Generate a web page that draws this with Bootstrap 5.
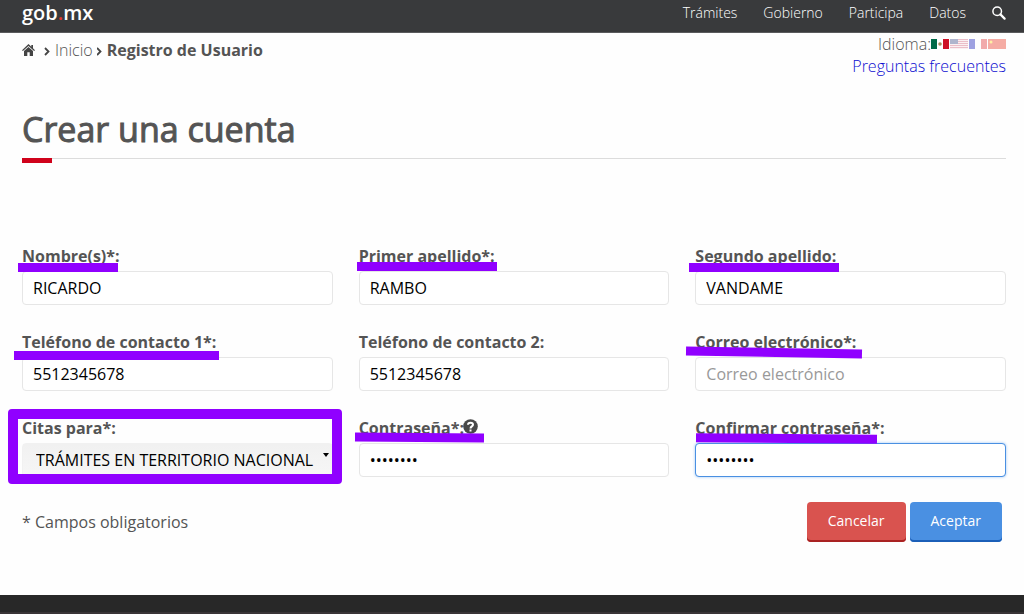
<!DOCTYPE html>
<html lang="es">
<head>
<meta charset="utf-8">
<meta name="viewport" content="width=device-width, initial-scale=1">
<title>Registro de Usuario</title>
<link href="https://cdn.jsdelivr.net/npm/bootstrap@5.3.0/dist/css/bootstrap.min.css" rel="stylesheet">
<style>
  body { font-family: "Open Sans", "Noto Sans", sans-serif; font-size: 16px; line-height: 22px; color: #545454; background: #fefefe; }
  .page-pad { padding-left: 22px; padding-right: 18px; }
  .topbar { height: 33px; background: #393a3c; border-bottom: 1px solid #5a5b5d; padding-bottom: 6px; }
  .topbar a { color: #fff; text-decoration: none; }
  .topbar .brand { font-size: 20px; line-height: 26px; font-weight: 600; }
  .topbar .brand span { color: #e0382c; }
  .menu { gap: 26px; font-size: 14px; font-weight: 300; }
  .menu button { line-height: 0; width: 14px; }
  .crumbs { gap: 4px; padding-top: 6px; }
  .crumbs a { color: #545454; font-weight: 300; text-decoration: none; }
  .crumbs .home { line-height: 18px; }
  .langs { font-weight: 300; line-height: 22px; }
  .langs a { color: #0c0cd0; text-decoration: none; }
  .flags { gap: 1px; }
  .flags button { line-height: 0; }
  .faded { opacity: .4; }
  .title-row { margin-top: 28px; border-bottom: 1px solid #dcdcdc; height: 54px; }
  .title-row h1 { font-size: 34px; line-height: 48px; font-weight: 400; margin: 0; -webkit-text-stroke: 1px #545454; }
  .red-bar { width: 30px; height: 5px; background: #d0021b; margin-top: -1px; }
  .fields { display: grid; grid-template-columns: repeat(3, minmax(0, 1fr)); gap: 26px; margin-top: 82px; }
  .field { position: relative; }
  .field label { display: block; font-weight: 700; line-height: 22px; height: 26px; }
  .field .form-control, .field .form-select { height: 34px; font-size: 16px; line-height: 22px; padding: 4px 10px; color: #000; border: 1px solid #e6e6e6; border-radius: 4px; background-color: #fff; }
  .field .form-control::placeholder { color: #999; }
  .field .form-control.active-box { border-color: #4a90e2; box-shadow: 0 0 3px #9cc5f5; }
  .field .form-select { background: linear-gradient(#f1f1f1, #f6f6f6); border-color: #f1f1f1; padding-left: 13px; }
  .caret { position: absolute; right: 4px; top: 36px; }
  .help { position: absolute; left: 104px; top: 2px; line-height: 0; }
  .marker { position: absolute; height: 9px; background: #9000ff; pointer-events: none; z-index: 2; }
  .m-name { left: -4px; top: 18px; width: 100px; }
  .m-first { left: -2px; top: 17px; width: 140px; }
  .m-second { left: -6px; top: 18px; width: 150px; }
  .m-phone { left: -8px; top: 20px; width: 205px; }
  .m-mail { left: -9px; top: 17px; width: 176px; transform: rotate(1deg); }
  .m-pass { left: -4px; top: 16px; width: 129px; transform: rotate(.5deg); }
  .m-conf { left: 1px; top: 17px; width: 181px; transform: rotate(.5deg); }
  .m-box { left: -14px; right: -9px; top: -8px; height: 75px; background: none; border: 10px solid #9000ff; border-radius: 4px; }
  .actions { margin-top: 25px; padding-right: 4px; gap: 4px; }
  .btn-gob { height: 40px; border: 0; border-radius: 4px; font-size: 14px; line-height: 20px; padding: 0 21px 2px; color: #fff; }
  .btn-gob.cancel { background: #d9534f; box-shadow: inset 0 -2px #a92222; }
  .btn-gob.accept { background: #4a90e2; box-shadow: inset 0 -2px #1b5fb8; }
  .bottom-bar { margin-top: 53px; height: 19px; background: #282828; border-bottom: 2px solid #393437; }
</style>
</head>
<body>
<header class="topbar page-pad d-flex align-items-center justify-content-between">
  <a class="brand" href="#">gob<span>.</span>mx</a>
  <nav class="menu d-flex align-items-center">
    <a href="#">Trámites</a>
    <a href="#">Gobierno</a>
    <a href="#">Participa</a>
    <a href="#">Datos</a>
    <button class="bg-transparent border-0 p-0" type="button" aria-label="Buscar">
      <svg width="14" height="14" viewBox="0 0 14 14" fill="none" stroke="#fff"><circle cx="5.200" cy="5.200" r="4.300" stroke-width="1.500"/><path d="M8.400 8.400 12.600 12.600" stroke-width="2.200" stroke-linecap="round"/></svg>
    </button>
  </nav>
</header>

<div class="page-pad d-flex justify-content-between">
  <nav class="crumbs d-flex align-items-start" aria-label="Ruta">
    <a class="home" href="#" aria-label="Portada"><svg width="13" height="14" viewBox="0 0 13 14" fill="#444"><path d="M6.500 1 0 7.200l.9.900L6.500 2.900l5.600 5.200.900-.900-2-1.900V2H9.300v1.700z"/><path d="M6.500 3.900 2 8v5h3.300V9.200h2.400V13H11V8z"/></svg></a>
    <svg class="mt-2 ms-1" width="8" height="10" viewBox="0 0 8 10" fill="none" stroke="#444" stroke-width="1.800"><path d="M2 1l3.500 3.500L2 8"/></svg>
    <a href="#">Inicio</a>
    <svg class="mt-2" width="6" height="10" viewBox="0 0 6 10" fill="none" stroke="#444" stroke-width="1.800"><path d="M0 1l3.500 3.500L0 8"/></svg>
    <strong>Registro de Usuario</strong>
  </nav>
  <div class="langs d-flex flex-column align-items-end">
    <div class="d-flex align-items-center">
      <span>Idioma:</span>
      <div class="flags d-flex">
        <button class="bg-transparent border-0 p-0" type="button" aria-label="Español"><svg width="18" height="10" viewBox="0 0 18 10"><path fill="#fff" d="M0 0h18v10H0z"/><path fill="#006a48" d="M0 0h6v10H0z"/><path fill="#ce1126" d="M12 0h6v10h-6z"/><circle cx="9" cy="5" r="1.800" fill="#a68b5c"/></svg></button>
        <button class="bg-transparent border-0 p-0 faded" type="button" aria-label="English"><svg width="18" height="10" viewBox="0 0 18 10"><path fill="#f6dde2" d="M0 0h18v10H0z"/><path stroke="#d06078" d="M0 .5h18M0 2.500h18M0 4.500h18M0 6.500h18M0 8.500h18"/><path fill="#3c4a86" d="M0 0h8v5H0z"/></svg></button>
        <button class="bg-transparent border-0 p-0 faded" type="button" aria-label="Français"><svg width="18" height="10" viewBox="0 0 18 10"><path fill="#fff" d="M0 0h18v10H0z"/><path fill="#1018b8" d="M0 0h6v10H0z"/><path fill="#e02e30" d="M12 0h6v10h-6z"/></svg></button>
        <button class="bg-transparent border-0 p-0 faded" type="button" aria-label="中文"><svg width="18" height="10" viewBox="0 0 18 10"><path fill="#e83420" d="M0 0h18v10H0z"/><circle cx="3" cy="3" r="1.500" fill="#ffdd20"/></svg></button>
      </div>
    </div>
    <a href="#">Preguntas frecuentes</a>
  </div>
</div>

<main class="page-pad">
  <div class="title-row"><h1>Crear una cuenta</h1></div>
  <div class="red-bar"></div>

  <form>
    <div class="fields">
      <div class="field">
        <label for="nombre">Nombre(s)*:</label>
        <input class="form-control" id="nombre" value="RICARDO">
        <span class="marker m-name"></span>
      </div>
      <div class="field">
        <label for="ap1">Primer apellido*:</label>
        <input class="form-control" id="ap1" value="RAMBO">
        <span class="marker m-first"></span>
      </div>
      <div class="field">
        <label for="ap2">Segundo apellido:</label>
        <input class="form-control" id="ap2" value="VANDAME">
        <span class="marker m-second"></span>
      </div>
      <div class="field">
        <label for="tel1">Teléfono de contacto 1*:</label>
        <input class="form-control" id="tel1" type="tel" value="5512345678">
        <span class="marker m-phone"></span>
      </div>
      <div class="field">
        <label for="tel2">Teléfono de contacto 2:</label>
        <input class="form-control" id="tel2" type="tel" value="5512345678">
      </div>
      <div class="field">
        <label for="mail">Correo electrónico*:</label>
        <input class="form-control" id="mail" type="email" placeholder="Correo electrónico">
        <span class="marker m-mail"></span>
      </div>
      <div class="field">
        <label for="citas">Citas para*:</label>
        <select class="form-select" id="citas"><option>TRÁMITES EN TERRITORIO NACIONAL</option></select>
        <svg class="caret" width="6" height="4" viewBox="0 0 6 4"><path d="M0 0h6L3 4z"/></svg>
        <span class="marker m-box"></span>
      </div>
      <div class="field">
        <label for="pass">Contraseña*:</label>
        <button class="help bg-transparent border-0 p-0" type="button" aria-label="Ayuda"><svg width="15" height="15" viewBox="0 0 15 15"><circle cx="7.500" cy="7.500" r="7.300" fill="#484848"/><path d="M5 5.800C5 3.200 10 3.200 10 5.800 10 7.400 7.500 7.400 7.500 9.400" fill="none" stroke="#fff" stroke-width="2"/><path fill="#fff" d="M6.500 10.500h2v2h-2z"/></svg></button>
        <input class="form-control" id="pass" type="password" value="12345678">
        <span class="marker m-pass"></span>
      </div>
      <div class="field">
        <label for="conf">Confirmar contraseña*:</label>
        <input class="form-control active-box" id="conf" type="password" value="12345678">
        <span class="marker m-conf"></span>
      </div>
    </div>
    <div class="actions d-flex align-items-center">
      <span class="me-auto">* Campos obligatorios</span>
      <button class="btn btn-gob cancel" type="button">Cancelar</button>
      <button class="btn btn-gob accept" type="button">Aceptar</button>
    </div>
  </form>
</main>
<footer class="bottom-bar"></footer>
<script src="https://cdn.jsdelivr.net/npm/bootstrap@5.3.0/dist/js/bootstrap.bundle.min.js"></script>
</body>
</html>
